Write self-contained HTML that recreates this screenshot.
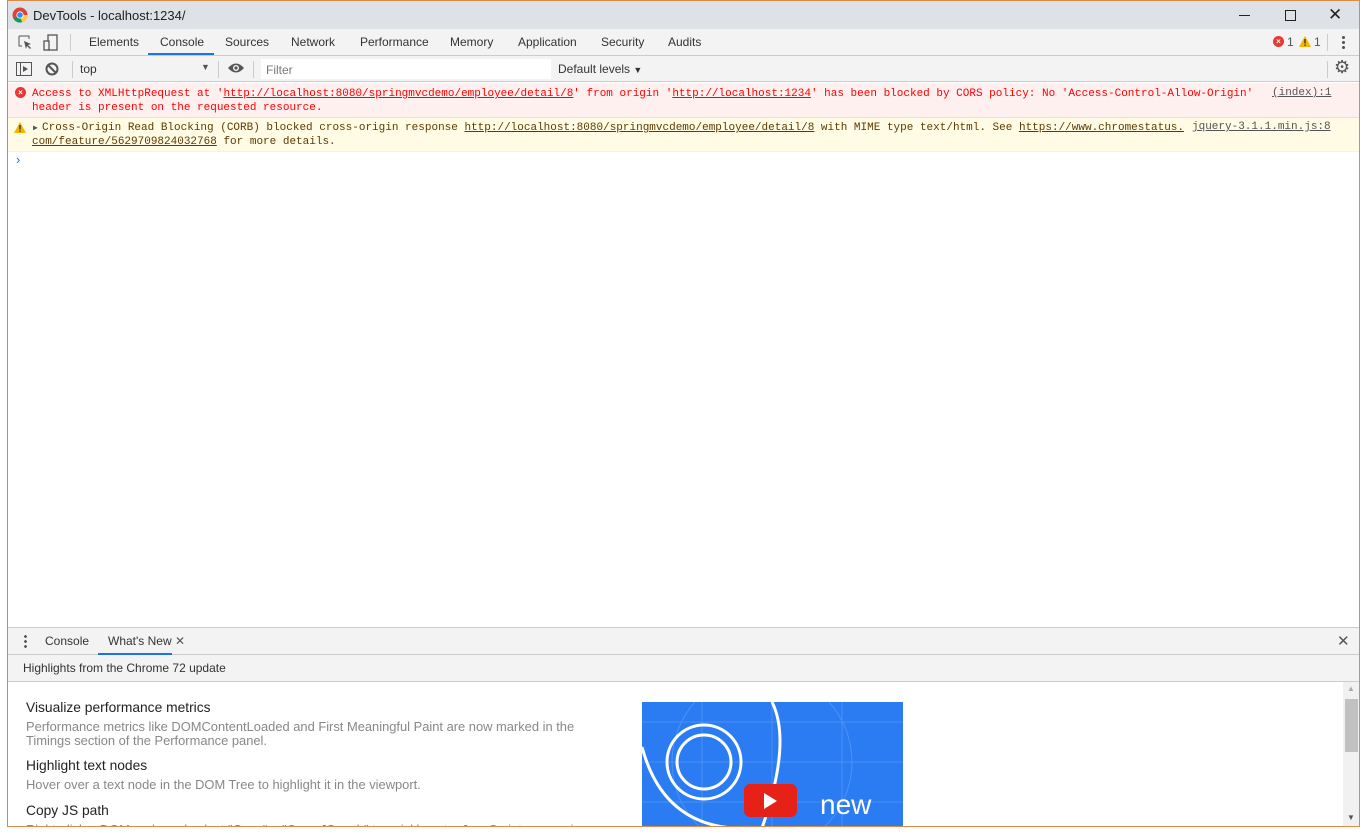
<!DOCTYPE html>
<html><head><style>
*{margin:0;padding:0;box-sizing:border-box}
body{width:1367px;height:834px;background:#fff;font-family:"Liberation Sans",sans-serif;font-size:12px;color:#333;position:relative;overflow:hidden}
#win{position:absolute;left:7px;top:0;width:1353px;height:827px;border:1px solid #e08a4a;border-left:1px solid #c98a5a;background:#fff;overflow:hidden}
.abs{position:absolute}
#title{left:0;top:0;width:100%;height:28px;background:#dee1e6}
#tabs{left:0;top:28px;width:100%;height:27px;background:#f3f3f3;border-bottom:1px solid #ccc}
.tab{position:absolute;top:6px;font-size:12px;color:#333}
#tb{left:0;top:55px;width:100%;height:26px;background:#f3f3f3;border-bottom:1px solid #ccc}
.mono{font-family:"Liberation Mono",monospace;font-size:11px}
#err{left:0;top:82px;width:100%;height:35px;background:#fff0f0;border-bottom:1px solid #ffd6d6;color:#f00}
#warn{left:0;top:117px;width:100%;height:34px;background:#fffbe5;border-bottom:1px solid #fff5c2;color:#5c3c00}
u{text-decoration:underline}
#drawer{left:0;top:626px;width:100%;height:28px;background:#f3f3f3;border-top:1px solid #ccc;border-bottom:1px solid #ccc}
#hl{left:0;top:654px;width:100%;height:27px;background:#f3f3f3;border-bottom:1px solid #ccc}
h3{font-weight:normal;font-size:13.8px;color:#222;position:absolute;left:18px}
.d{position:absolute;left:18px;color:#888;font-size:12.9px;line-height:14px}
</style></head><body>
<div id="win">
 <div class="abs" id="title">
  <svg class="abs" style="left:4px;top:6px" width="16" height="16" viewBox="0 0 16 16"><circle cx="8" cy="8" r="7.5" fill="#db4437"/><path d="M8 8 L1.5 11.7 A7.5 7.5 0 0 0 10 15.3Z" fill="#0f9d58"/><path d="M8 8 L10 15.3 A7.5 7.5 0 0 0 15.5 8 L8 8Z" fill="#ffcd40"/><circle cx="8" cy="8" r="3.6" fill="#fff"/><circle cx="8" cy="8" r="2.8" fill="#4285f4"/></svg>
  <div class="abs" style="left:25px;top:7px;font-size:13px;color:#222">DevTools - localhost:1234/</div>
  <div class="abs" style="left:1231px;top:14px;width:11px;height:1px;background:#222"></div>
  <div class="abs" style="left:1277px;top:9px;width:11px;height:11px;border:1px solid #222"></div>
  <div class="abs" style="left:1320px;top:4px;font-size:17px;color:#222">✕</div>
 </div>
 <div class="abs" id="tabs">
  <svg class="abs" style="left:10px;top:6px" width="16" height="16"><path d="M1 1h10v3M1 1v10h3" stroke="#555" fill="none"/><path d="M6 6l7 3-3 1 3 3-1 1-3-3-1 3z" fill="#555"/></svg>
  <svg class="abs" style="left:35px;top:5px" width="16" height="18"><rect x="5" y="1" width="9" height="15" fill="none" stroke="#555" stroke-width="1.3"/><rect x="1" y="7" width="5" height="9" fill="#f3f3f3" stroke="#555" stroke-width="1.3"/></svg>
  <div class="abs" style="left:62px;top:5px;width:1px;height:17px;background:#ccc"></div>
  <span class="tab" style="left:81px">Elements</span>
  <span class="tab" style="left:152px">Console</span>
  <div class="abs" style="left:140px;top:24px;width:66px;height:2px;background:#1a73e8"></div>
  <span class="tab" style="left:217px">Sources</span>
  <span class="tab" style="left:283px">Network</span>
  <span class="tab" style="left:352px">Performance</span>
  <span class="tab" style="left:442px">Memory</span>
  <span class="tab" style="left:510px">Application</span>
  <span class="tab" style="left:593px">Security</span>
  <span class="tab" style="left:660px">Audits</span>
  <div class="abs" style="left:1265px;top:7px;width:11px;height:11px;border-radius:50%;background:#e53935;color:#fff;font-size:8px;text-align:center;line-height:11px;font-weight:bold">×</div>
  <span class="tab" style="left:1279px;color:#555">1</span>
  <svg class="abs" style="left:1291px;top:7px" width="12" height="11"><path d="M6 0L12 11H0z" fill="#f4b400"/><rect x="5.3" y="3" width="1.4" height="4.5" fill="#333"/><rect x="5.3" y="8.5" width="1.4" height="1.4" fill="#333"/></svg>
  <span class="tab" style="left:1306px;color:#555">1</span>
  <div class="abs" style="left:1319px;top:5px;width:1px;height:17px;background:#ccc"></div>
  <div class="abs" style="left:1334px;top:6px;width:3px;height:14px;background:radial-gradient(circle,#555 1.4px,transparent 1.6px) 0 0/3px 5px"></div>
 </div>
 <div class="abs" id="tb">
  <svg class="abs" style="left:8px;top:6px" width="16" height="14"><rect x="0.5" y="0.5" width="15" height="13" fill="none" stroke="#555"/><line x1="4.5" y1="1" x2="4.5" y2="13" stroke="#555"/><path d="M7 4l5 3-5 3z" fill="#555"/></svg>
  <svg class="abs" style="left:37px;top:6px" width="14" height="14"><circle cx="7" cy="7" r="5.5" fill="none" stroke="#555" stroke-width="2"/><line x1="3" y1="3" x2="11" y2="11" stroke="#555" stroke-width="2"/></svg>
  <div class="abs" style="left:64px;top:5px;width:1px;height:17px;background:#ccc"></div>
  <span class="abs" style="left:72px;top:6px">top</span>
  <span class="abs" style="left:193px;top:6px;font-size:9px;color:#555">▼</span>
  <div class="abs" style="left:210px;top:5px;width:1px;height:17px;background:#ccc"></div>
  <svg class="abs" style="left:219px;top:6px" width="18" height="12"><path d="M1 6Q9 -3 17 6Q9 15 1 6z" fill="#555"/><circle cx="9" cy="6" r="3" fill="#f3f3f3"/><circle cx="9" cy="6" r="1.6" fill="#555"/></svg>
  <div class="abs" style="left:245px;top:5px;width:1px;height:17px;background:#ccc"></div>
  <div class="abs" style="left:253px;top:3px;width:290px;height:20px;background:#fff"></div>
  <span class="abs" style="left:258px;top:7px;color:#777">Filter</span>
  <span class="abs" style="left:550px;top:6px">Default levels <span style="font-size:9px">▼</span></span>
  <div class="abs" style="left:1319px;top:5px;width:1px;height:17px;background:#ccc"></div>
  <div class="abs" style="left:1326px;top:1px;font-size:18px;color:#555">⚙</div>
 </div>
 <div class="abs mono" id="err">
  <div class="abs" style="left:7px;top:4px;width:11px;height:11px;border-radius:50%;background:#e53935;color:#fff;font-size:8px;text-align:center;line-height:11px;font-family:'Liberation Sans';font-weight:bold">×</div>
  <div class="abs" style="left:24px;top:4px;line-height:14px;white-space:pre">Access to XMLHttpRequest at '<u>http://localhost:8080/springmvcdemo/employee/detail/8</u>' from origin '<u>http://localhost:1234</u>' has been blocked by CORS policy: No 'Access-Control-Allow-Origin'
header is present on the requested resource.</div>
  <u class="abs" style="left:1264px;top:4px;color:#555">(index):1</u>
 </div>
 <div class="abs mono" id="warn">
  <svg class="abs" style="left:6px;top:4px" width="12" height="11"><path d="M6 0L12 11H0z" fill="#f4b400"/><rect x="5.3" y="3" width="1.4" height="4.5" fill="#333"/><rect x="5.3" y="8.5" width="1.4" height="1.4" fill="#333"/></svg>
  <span class="abs" style="left:25px;top:5px;font-size:8px;color:#555">▶</span>
  <div class="abs" style="left:34px;top:3px;line-height:14px;white-space:pre">Cross-Origin Read Blocking (CORB) blocked cross-origin response <u>http://localhost:8080/springmvcdemo/employee/detail/8</u> with MIME type text/html. See <u>https://www.chromestatus.</u></div>
  <div class="abs" style="left:24px;top:17px;line-height:14px;white-space:pre"><u>com/feature/5629709824032768</u> for more details.</div>
  <u class="abs" style="left:1184px;top:3px;color:#555">jquery-3.1.1.min.js:8</u>
 </div>
 <span class="abs" style="left:8px;top:151px;color:#1a73e8;font-size:13px">›</span>
 <div class="abs" id="drawer">
  <div class="abs" style="left:16px;top:6px;width:3px;height:14px;background:radial-gradient(circle,#555 1.3px,transparent 1.5px) 0 0/3px 5px"></div>
  <span class="abs" style="left:37px;top:6px">Console</span>
  <span class="abs" style="left:100px;top:6px">What's New <span style="color:#555">✕</span></span>
  <div class="abs" style="left:90px;top:25px;width:74px;height:2px;background:#1a73e8"></div>
  <span class="abs" style="left:1329px;top:4px;font-size:15px;color:#555">✕</span>
 </div>
 <div class="abs" id="hl"><span class="abs" style="left:15px;top:6px">Highlights from the Chrome 72 update</span></div>
 <h3 style="top:699px">Visualize performance metrics</h3>
 <div class="d" style="top:719px">Performance metrics like DOMContentLoaded and First Meaningful Paint are now marked in the<br>Timings section of the Performance panel.</div>
 <h3 style="top:757px">Highlight text nodes</h3>
 <div class="d" style="top:777px">Hover over a text node in the DOM Tree to highlight it in the viewport.</div>
 <h3 style="top:802px">Copy JS path</h3>
 <div class="d" style="top:822px">Right-click a DOM node and select "Copy" &gt; "Copy JS path" to quickly get a JavaScript expression</div>
 <svg class="abs" style="left:634px;top:701px" width="261" height="126" viewBox="0 0 261 126">
  <rect width="261" height="126" fill="#2b7cf2"/>
  <g stroke="#4a92f5" stroke-width="1" fill="none"><line x1="0" y1="20" x2="261" y2="20"/><line x1="0" y1="60" x2="261" y2="60"/><line x1="0" y1="100" x2="261" y2="100"/><line x1="60" y1="0" x2="60" y2="126"/><line x1="130" y1="0" x2="130" y2="126"/><line x1="200" y1="0" x2="200" y2="126"/><circle cx="120" cy="60" r="90"/></g>
  <g stroke="#fff" stroke-width="3" fill="none"><circle cx="62" cy="60" r="37"/><circle cx="62" cy="60" r="27"/><path d="M120 126 Q150 40 130 0"/><path d="M0 45 Q20 120 90 126"/></g>
  <rect x="102" y="82" width="53" height="33" rx="6" fill="#e62117"/><path d="M122 91l13 8-13 8z" fill="#fff"/>
  <text x="178" y="112" font-family="Liberation Sans" font-size="28" fill="#fff">new</text>
 </svg>
 <div class="abs" style="left:1335px;top:681px;width:16px;height:146px;background:#f1f1f1"></div>
 <div class="abs" style="left:1337px;top:698px;width:13px;height:53px;background:#c1c1c1"></div>
 <span class="abs" style="left:1339px;top:683px;font-size:8px;color:#aaa">▲</span>
 <span class="abs" style="left:1339px;top:812px;font-size:8px;color:#555">▼</span>
</div>
</body></html>
